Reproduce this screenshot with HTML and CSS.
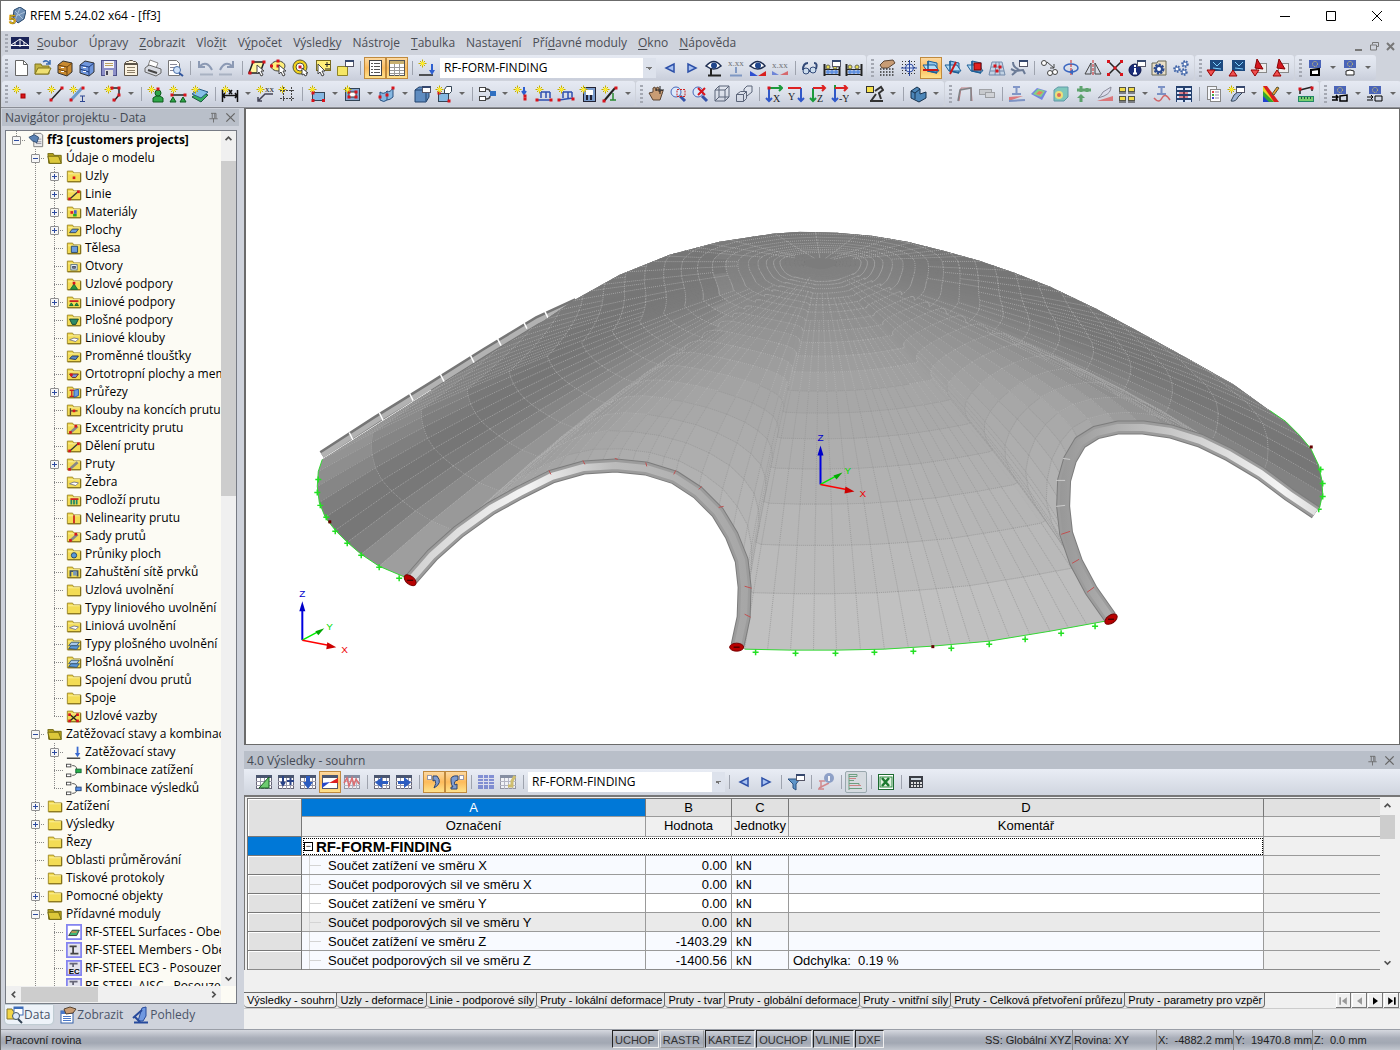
FILE: index.html
```html
<!doctype html>
<html lang="cs">
<head>
<meta charset="utf-8">
<title>RFEM 5.24.02 x64 - [ff3]</title>
<link rel="stylesheet" href="styles.css">
</head>
<body>
<header class="titlebar">
	<span class="logo" data-icon="logo"></span>
	<h1>RFEM 5.24.02 x64 - [ff3]</h1>
	<div class="winbtns">
		<button type="button" aria-label="Minimalizovat"><svg width="12" height="12"><path d="M1 6.500h10" stroke="#000"/></svg></button>
		<button type="button" aria-label="Maximalizovat"><svg width="12" height="12"><path d="M1.500 1.500h9v9h-9z" stroke="#000" fill="none"/></svg></button>
		<button type="button" aria-label="Zavřít"><svg width="12" height="12"><path d="M1 1l10 10M11 1L1 11" stroke="#000"/></svg></button>
	</div>
</header>
<nav class="menubar">
	<span class="grip"></span>
	<span class="bridge" data-icon="bridge"></span>
	<a href="#"><u>S</u>oubor</a>
	<a href="#">Úpr<u>a</u>vy</a>
	<a href="#"><u>Z</u>obrazit</a>
	<a href="#">Vlož<u>i</u>t</a>
	<a href="#">V<u>ý</u>počet</a>
	<a href="#">Výsled<u>k</u>y</a>
	<a href="#">Nástro<u>j</u>e</a>
	<a href="#"><u>T</u>abulka</a>
	<a href="#">Nasta<u>v</u>ení</a>
	<a href="#">Pří<u>d</u>avné moduly</a>
	<a href="#"><u>O</u>kno</a>
	<a href="#"><u>N</u>ápověda</a>
	<div class="docbtns">
		<button type="button" aria-label="Minimalizovat dokument"><svg width="9" height="9"><path d="M1 8h7" stroke="#777" stroke-width="2"/></svg></button>
		<button type="button" aria-label="Obnovit dokument"><svg width="9" height="9"><path d="M2.500 2.500v-2h6v4h-2M.5 3h6v5h-6z" stroke="#777" fill="none"/></svg></button>
		<button type="button" aria-label="Zavřít dokument"><svg width="9" height="9"><path d="M1 1l7 7M8 1L1 8" stroke="#777" stroke-width="2"/></svg></button>
	</div>
</nav>
<div class="toolrow">
	<div class="bar"><span class="grip"></span>
		<span class="set" data-set="new open cabinet cabinetBlue save clip print preview | undo redo | selPara selEllipse selRing selNote noteWin | *list *table | load"></span>
		<select class="combo case" aria-label="Zatěžovací stav"><option>RF-FORM-FINDING</option></select>
		<span class="set" data-set="left right eyeSup xDown eyeDiag xDiag | glasses fenceWin fence"></span>
	</div>
	<div class="bar"><span class="grip"></span><span class="set" data-set="handGrid gridSnap *planeXY planeYZ planeXZ meshGrid wrench | moveCopy rotate mirror scaleX info gearBox gears"></span></div>
	<div class="bar"><span class="grip"></span><span class="set" data-set="blueDown blueUp redDown redUp"></span></div>
	<div class="bar"><span class="grip"></span><span class="set" data-set="euA v euB v"></span></div>
</div>
<div class="toolrow second">
	<div class="bar"><span class="grip"></span><span class="set" data-set="node v line lineI v poly v | support lineSupport solidSupport | dim v dimXX frame | surf v opening v wavy v box boxes v | combo v loadNode loadLine loadLine2 loadSurf loadFree v"></span></div>
	<div class="bar"><span class="grip"></span><span class="set" data-set="hand zoomWin zoomX cube cubes | axX axY axZ axNY v robot v | solid v"></span></div>
	<div class="bar"><span class="grip"></span><span class="set" data-set="frameD tank | beamI contour cubeC arrows paint boxes4 v beamWave tableBlue | report brush v colors v measure"></span></div>
	<div class="bar"><span class="grip"></span><span class="set" data-set="euC v euD v"></span></div>
</div>
<main class="work">
	<aside class="navigator">
		<div class="caption"><h2>Navigátor projektu - Data</h2>
			<button type="button" aria-label="Připnout navigátor" data-icon="pin"></button>
			<button type="button" aria-label="Zavřít navigátor" data-icon="close"></button>
		</div>
		<div class="treebox">
			<ul class="tree" id="tree"></ul>
			<div class="vscroll"><span data-icon="up"></span><i class="thumb"></i><span data-icon="down"></span></div>
			<div class="hscroll"><span data-icon="lt"></span><i class="thumb"></i><span data-icon="gt"></span></div>
		</div>
		<div class="navtabs">
			<button type="button" class="on"><span data-icon="tabData"></span>Data</button>
			<button type="button"><span data-icon="tabView"></span>Zobrazit</button>
			<button type="button"><span data-icon="tabScope"></span>Pohledy</button>
		</div>
	</aside>
	<div class="right">
		<section class="view">
			<svg id="model" viewBox="246 109 1152 636" preserveAspectRatio="xMidYMid meet" role="img" aria-label="Model ff3">
				<defs>
					<clipPath id="shell"><path id="shellPath"/></clipPath>
					<linearGradient id="hl1" gradientUnits="userSpaceOnUse" x1="405" y1="0" x2="750" y2="0">
						<stop offset="0" stop-color="#d0d0d0"/><stop offset=".35" stop-color="#f4f4f4"/><stop offset=".6" stop-color="#bcbcbc"/><stop offset="1" stop-color="#a6a6a6"/>
					</linearGradient>
					<linearGradient id="hl2" gradientUnits="userSpaceOnUse" x1="1060" y1="0" x2="1320" y2="0">
						<stop offset="0" stop-color="#989898"/><stop offset=".3" stop-color="#bababa"/><stop offset=".85" stop-color="#f4f4f4"/><stop offset="1" stop-color="#ddd"/>
					</linearGradient>
				</defs>
				<g id="pipe" fill="none"></g>
				<g id="mesh" clip-path="url(#shell)"></g>
				<g id="edges" fill="none"></g>
				<g id="tubes" fill="none"></g>
				<g id="axes"></g>
			</svg>
		</section>
		<section class="results">
			<div class="caption"><h2>4.0 Výsledky - souhrn</h2>
				<button type="button" aria-label="Připnout tabulku" data-icon="pin"></button>
				<button type="button" aria-label="Zavřít tabulku" data-icon="close"></button>
			</div>
			<div class="restools">
				<span class="set" data-set="tEdit tInsert tDown *tColor tWave | tLeft tRight | *jumpA *jumpB | tBlue tPick |"></span>
				<select class="combo rescase" aria-label="Výsledky pro"><option>RF-FORM-FINDING</option></select>
				<span class="set" data-set="| left right | filter | infoBeam | +bars | excel | calc"></span>
			</div>
			<div class="grid">
				<table>
					<colgroup><col class="c0"><col class="ca"><col class="cb"><col class="cc"><col class="cd"><col></colgroup>
					<thead>
						<tr class="letters"><th rowspan="2"></th><th class="sel">A</th><th>B</th><th>C</th><th>D</th><th class="none"></th></tr>
						<tr class="names"><th class="field">Označení</th><th>Hodnota</th><th>Jednotky</th><th>Komentář</th><th></th></tr>
					</thead>
					<tbody>
						<tr class="group"><th class="sel"></th><td colspan="4"><button type="button" aria-label="Sbalit">−</button>RF-FORM-FINDING</td><td class="rest"></td></tr>
						<tr><th></th><td class="name">Součet zatížení ve směru X</td><td class="num">0.00</td><td>kN</td><td></td><td class="rest"></td></tr>
						<tr><th></th><td class="name">Součet podporových sil ve směru X</td><td class="num">0.00</td><td>kN</td><td></td><td class="rest"></td></tr>
						<tr class="white"><th></th><td class="name">Součet zatížení ve směru Y</td><td class="num">0.00</td><td>kN</td><td></td><td class="rest"></td></tr>
						<tr class="grey"><th></th><td class="name">Součet podporových sil ve směru Y</td><td class="num">0.00</td><td>kN</td><td></td><td class="rest"></td></tr>
						<tr><th></th><td class="name">Součet zatížení ve směru Z</td><td class="num">-1403.29</td><td>kN</td><td></td><td class="rest"></td></tr>
						<tr><th></th><td class="name">Součet podporových sil ve směru Z</td><td class="num">-1400.56</td><td>kN</td><td>Odchylka:&nbsp; 0.19 %</td><td class="rest"></td></tr>
					</tbody>
				</table>
				<div class="vscroll"><span data-icon="up"></span><i class="thumb"></i><span data-icon="down"></span></div>
			</div>
			<div class="sheets">
				<button type="button" class="on">Výsledky - souhrn</button>
				<button type="button">Uzly - deformace</button>
				<button type="button">Linie - podporové síly</button>
				<button type="button">Pruty - lokální deformace</button>
				<button type="button">Pruty - tvar</button>
				<button type="button">Pruty - globální deformace</button>
				<button type="button">Pruty - vnitřní síly</button>
				<button type="button">Pruty - Celková přetvoření průřezu</button>
				<button type="button">Pruty - parametry pro vzpěr</button>
				<div class="steps">
					<button type="button" aria-label="První" data-icon="first" disabled></button>
					<button type="button" aria-label="Předchozí" data-icon="prev" disabled></button>
					<button type="button" aria-label="Další" data-icon="next"></button>
					<button type="button" aria-label="Poslední" data-icon="last"></button>
				</div>
			</div>
		</section>
	</div>
</main>
<footer class="status">
	<span class="hint">Pracovní rovina</span>
	<div class="modes">
		<button type="button" aria-pressed="true">UCHOP</button>
		<button type="button" aria-pressed="false">RASTR</button>
		<button type="button" aria-pressed="true">KARTEZ</button>
		<button type="button" aria-pressed="true">OUCHOP</button>
		<button type="button" aria-pressed="true">VLINIE</button>
		<button type="button" aria-pressed="true">DXF</button>
	</div>
	<div class="coords">
		<span class="ss">SS: Globální XYZ</span>
		<span class="rov">Rovina: XY</span>
		<span class="cx">X:&nbsp; -4882.2 mm</span>
		<span class="cy">Y:&nbsp; 19470.8 mm</span>
		<span class="cz">Z:&nbsp; 0.0 mm</span>
	</div>
</footer>
<script src="app.js"></script>
</body>
</html>
```
FILE: styles.css
```css
*{box-sizing:border-box;}
html,body{height:100%;}
body{margin:0; display:flex; flex-direction:column; overflow:hidden; background:#cfd3dc; border-top:1px solid #6b6b6b; border-left:1px solid #6b6b6b; font:12px/16px "Open Sans","Noto Sans",sans-serif; color:#000;}
button,select{font:inherit; color:inherit; padding:0; margin:0; border:0; background:none;}
h1,h2{margin:0; font-size:12px; font-weight:normal;}
ul{margin:0; padding:0; list-style:none;}
svg{display:block;}

.titlebar{display:flex; align-items:center; height:30px; flex:none; padding-left:7px; background:#fff;}
.titlebar h1{padding-left:4px; font-size:12px;}
.winbtns{margin-left:auto; display:flex;}
.winbtns button{width:46px; height:30px; display:flex; align-items:center; justify-content:center;}

.menubar{display:flex; align-items:center; height:24px; flex:none; gap:11px; color:#4a4d55;}
.menubar a{color:inherit; text-decoration:none;}
.menubar u{text-underline-offset:2px;}
.menubar .grip{margin:0 -8px 0 4px;}
.bridge{margin-right:-3px;}
.docbtns{margin:6px 5px 0 auto; display:flex; gap:7px;}

.grip{width:3px; height:18px; flex:none; background:repeating-linear-gradient(#a4a8b2 0 2px,transparent 2px 4px);}
.toolrow{display:flex; height:26px; flex:none; overflow:hidden; padding-left:1px;}
.second{border-bottom:1px solid #8a8d96; height:27px;}
.bar{display:flex; align-items:center; flex:none; height:25px; margin-right:1px; padding:0 2px 0 4px; border-radius:3px; background:linear-gradient(#e6eaf3,#dbe0ea 50%,#c9cedb);}
.bar .grip{margin-right:2px;}
.bar:first-child{padding:0 1px 0 3px;}
.set{display:flex; align-items:center; flex:none;}
.tool{width:22px; height:22px; display:flex; align-items:center; justify-content:center;}
.tool.active{border:1px solid #c08a3e; background:linear-gradient(#fdd9a0,#fdbb5c 50%,#fee28b);}
.tool.pressed{border:1px solid #9aa8ae; border-radius:2px; background:#d6dbe0;}
.sep{width:1px; height:14px; margin:0 3px 0 4px; background:#9ea3ae;}
.drop{width:13px; height:22px; display:flex; align-items:center; justify-content:center;}
.drop::before{content:""; border:3px solid transparent; border-top-color:#666; border-bottom:0;}
.combo{height:20px; padding:0 16px 0 4px; appearance:none; border-radius:0; background-color:#fff; background-repeat:no-repeat;
	background-image:linear-gradient(45deg,transparent 50%,#777 50%),linear-gradient(-45deg,transparent 50%,#777 50%),linear-gradient(#dde2ec,#dde2ec);
	background-position:right 7px top 9px,right 4px top 9px,right; background-size:3px 3px,3px 3px,13px 100%;}
.case{width:216px; margin:0 3px 0 2px;}
.rescase{width:197px; margin:0 0 0 1px;}

.work{flex:1; display:flex; min-height:0;}
.caption{display:flex; align-items:center; flex:none; height:17px; padding:0 4px 0 3px; gap:2px; background:#b9bfc9; color:#444a54;}
.caption h2{flex:1; line-height:17px;}
.navigator{width:239px; flex:none; display:flex; flex-direction:column; padding:1px 1px 0 1px;}
.navigator .caption{padding-right:1px;}
.treebox{flex:1; min-height:0; margin:4px 2px 0 3px; border:1px solid #777b84; display:grid; grid-template:minmax(0,1fr) 17px/minmax(0,1fr) 15px; background:#fcfbf4;}
.tree{overflow:hidden;}
.tree li{display:flex; height:18px; white-space:nowrap; line-height:17px; padding-left:1px;}
.tree li:first-child{font-weight:bold; line-height:17px;}
.tree i{width:19px; height:18px; flex:none; display:flex; align-items:center; justify-content:center;}
.tree .v,.tree .t,.tree .e{background:repeating-linear-gradient(#888 0 1px,transparent 1px 2px) 9px 0/1px 18px no-repeat;}
.tree .t{background:repeating-linear-gradient(#888 0 1px,transparent 1px 2px) 9px 0/1px 18px no-repeat,repeating-linear-gradient(90deg,#888 0 1px,transparent 1px 2px) 9px 9px/10px 1px no-repeat;}
.tree .e{background:repeating-linear-gradient(#888 0 1px,transparent 1px 2px) 9px 0/1px 9px no-repeat,repeating-linear-gradient(90deg,#888 0 1px,transparent 1px 2px) 9px 9px/10px 1px no-repeat;}
.tree li button{width:9px; height:9px; border:1px solid #8f8f8f; border-radius:1px; background:linear-gradient(#2d4ba0,#2d4ba0) center/5px 1px no-repeat #f6f6f6;}
.tree li button.plus{background:linear-gradient(#2d4ba0,#2d4ba0) center/5px 1px no-repeat,linear-gradient(#2d4ba0,#2d4ba0) center/1px 5px no-repeat #f6f6f6;}
.tree li span{width:16px; height:16px; flex:none; margin:1px 3px 0 2px;}
.vscroll{display:flex; flex-direction:column; align-items:center; background:#f0f0f0;}
.vscroll span:last-child{margin-top:auto;}
.vscroll .thumb{width:100%; height:335px; margin-top:15px; background:#cdcdcd;}
.hscroll{display:flex; align-items:center; background:#f0f0f0;}
.hscroll .thumb{width:77px; height:15px; background:#cdcdcd;}
.hscroll span:last-child{margin-left:auto;}
.navtabs{display:flex; height:25px; flex:none; gap:5px; padding:1px 3px 5px; color:#4a5468;}
.navtabs button{display:flex; align-items:center; padding:0 3px 0 1px;}
.navtabs .on{background:#eef3f9; border-radius:0 0 4px 4px; box-shadow:0 0 2px #9bb;}

.right{flex:1; min-width:0; display:flex; flex-direction:column; padding-left:4px;}
.view{flex:1; min-height:0; background:#fff; border:1px solid #6b6b6b; border-width:1px 1px 1px 2px; margin-bottom:6px;}
#model{width:100%; height:100%;}
.results{flex:none; background:#f0f0f0;}
.results .caption{height:18px; padding-right:3px;}
.restools{display:flex; align-items:center; height:26px; padding-left:9px; background:linear-gradient(#e9edf5,#d0d5df);}
.grid{display:flex; border-top:2px solid #777; border-left:1px solid #777; padding:1px 5px 0 2px; font:13px/17px "Liberation Sans",Arial,sans-serif;}
.grid table{flex:1; min-width:0; border-collapse:collapse; table-layout:fixed; border-top:1px solid #8b8b8b; border-bottom:1px solid #8b8b8b;}
.c0{width:54px;} .ca{width:344px;} .cb{width:86px;} .cc{width:57px;} .cd{width:475px;}
.grid td,.grid th{height:19px; padding:0 4px; border:1px solid #9a9a9a; border-width:1px 1px 0 1px; font-weight:normal; white-space:nowrap; overflow:hidden;}
.grid th:first-child{background:#e1e1e1; border-color:#777; box-shadow:inset 1px 1px #fff;}
.grid .letters th{height:18px; background:#e1e1e1; border-color:#777;}
.grid .names th{height:19px; padding:0 0 2px; background:#f0f0f0; box-shadow:none; border-color:#9a9a9a;}
.grid .letters th.sel,.grid th.sel:first-child{background:#0078d7; color:#fff; box-shadow:none;}
.grid td{background:#f8faff;}
.grid .num{text-align:right;}
.grid .white td{background-color:#fff;}
.grid .grey td{background-color:#eaeaea;}
.grid tr td.rest{background:#f0f0f0; border-right:0;}
.grid th:last-child{border-right:0;}
.grid td.name{padding-left:26px; background-image:linear-gradient(#d4d4d4,#d4d4d4),linear-gradient(#d4d4d4,#d4d4d4); background-size:1px 100%,12px 1px; background-position:7px 0,7px 9px; background-repeat:no-repeat;}
.grid .group td{background:#fff; font-size:15px; font-weight:bold; padding-left:2px; outline:1px dotted #000; outline-offset:-2px;}
.grid .group td.rest{outline:0;}
.group button{width:9px; height:9px; margin-right:3px; border:1px solid #000; font:9px/7px "Liberation Sans",Arial,sans-serif; vertical-align:3px; background:#fff;}
.grid .vscroll{width:15px;}
.grid .vscroll .thumb{height:24px; margin-top:2px;}
.sheets{display:flex; margin-top:22px; height:17px; border-top:1px solid #6b6b6b; border-bottom:1px solid #ccc; font:11px/15px "Liberation Sans",Arial,sans-serif;}
.sheets>button{height:15px; padding:0 2px 0 3px; background:#e6e6e6; border:1px solid #6b6b6b; border-width:0 1px 1px 0; border-radius:0 0 4px 4px; white-space:nowrap;}
.sheets .on{background:#f0f0f0;}
.steps{margin-left:auto; display:flex;}
.steps button{width:15px; height:15px; margin-right:1px; background:#f0f0f0; box-shadow:inset -1px -1px #777,inset 1px 1px #fff; display:flex; align-items:center; justify-content:center;}
.results::after{content:""; display:block; height:20px;}

.status{flex:none; display:grid; grid-template-columns:611px auto 1fr; height:21px; border-top:1px solid #9a9ea7; font:11px/18px "Liberation Sans",Arial,sans-serif; color:#222; background:linear-gradient(#d5d8df,#a9aeb9 40%,#a2a8b3 65%,#c3c7cf);}
.hint{padding-left:4px; line-height:20px;}
.modes{display:flex; gap:1px;}
.modes button{height:18px; padding:0 3px 0 2px; color:#333; border:1px solid #000; border-color:#222 #eee #eee #222;}
.modes button[aria-pressed=false]{border-color:#ddd #999 #999 #ddd; padding-bottom:2px;}
.coords{display:flex; justify-content:flex-end; padding-right:24px; line-height:20px;}
.coords span{border-left:1px solid #888; padding-left:1px; white-space:nowrap;}
.coords .ss{border:0;}
.ss{width:88px;} .rov{width:84px;} .cx{width:77px;} .cy{width:79px;} .cz{width:64px;}
```
FILE: app.js
```js
// small drawing helpers, every icon lives on an 18x18 grid
function p(d, s, w, f) { return '<path d="' + d + '" stroke="' + (s || 'none') + '" stroke-width="' + (w || 1) + '" fill="' + (f || 'none') + '"/>'; }
function r(x, y, w, h, f, s) { return '<rect x="' + x + '" y="' + y + '" width="' + w + '" height="' + h + '" fill="' + f + '"' + (s ? ' stroke="' + s + '"' : '') + '/>'; }
function c(x, y, q, f, s) { return '<circle cx="' + x + '" cy="' + y + '" r="' + q + '" fill="' + f + '"' + (s ? ' stroke="' + s + '"' : '') + '/>'; }
function dot(x, y) { return r(x - 1.5, y - 1.5, 3, 3, '#d8141c'); }
function t(s, x, y, z, f) { return '<text x="' + x + '" y="' + y + '" font-size="' + z + '" fill="' + (f || '#222') + '" font-family="Liberation Serif">' + s + '</text>'; }
function op(o, s) { return '<g opacity="' + o + '">' + s + '</g>'; }

var star = p('M4.500 .5v8M.5 4.500h8M2 2l5 5M7 2l-5 5', '#c2ac00') + p('M4.500 2.500v4M2.500 4.500h4', '#ffee2e', 2);
var win = r(9.5, 1.5, 8, 6, '#fff', '#556') + r(9, 1, 9, 2, '#36486e');
var cursor = p('M9 6v9l2-2 2 4 2-1-2-4h3z', '#444', 1, '#fff');
var gridBg = r(1.5, 2.5, 15, 13, '#fff', '#667') + r(1, 2, 16, 3, '#4a5670') + p('M1 8.500h16M1 12.500h16M5.500 5v11M9.500 5v11M13.500 5v11', '#99a');
function cab(a, b) { return p('M2 6l5-4 9 2v9l-5 4-9-3z', '#333', 1, a) + p('M2 6l9 2v9M2 10l9 3M11 8l5-4', b) + r(5, 8, 3, 1, '#fff') + r(5, 12, 3, 1, '#fff'); }
function eu(x) { return r(3, 1, 12, 8, '#4a64b8') + '<circle cx="9" cy="5" r="2.500" fill="none" stroke="#e0d060" stroke-dasharray="1 1"/>' + x; }
function plane(x) { return p('M6 2l9 2v10l-9-2z', '#1d5f96', 1, '#8fc4ea') + p('M1 6h12l4 6H5z', '#1d5f96', 1, '#b4dcf6') + p('M6 2v10l9 2', '#1d5f96', 1.5) + x; }
function ax(a, b, l, g) { return p(a, '#1c9a3c', 2) + p(b, '#3058c8', 2) + t(l, 8, 17, 10) + (g || ''); }
var ibeam = p('M5 2h7M8.500 2v7M4 9h9', '#5b77b8', 2);
var eye = p('M1 7q8-9 15 0-7 6-15 0z', '#1c2c50', 1.5, '#fff') + c(9, 6.5, 3, '#20468c');
var picket = p('M1.500 5v12M16.500 5v12', '#222', 2) + p('M1 10.500h16M1 15.500h16', '#222') + c(5, 8, 2, '#e8dc50', '#665') + c(9, 13, 2, '#5f8fe0') + c(12, 8, 2, '#e8dc50', '#665') + c(5, 13, 2, '#5f8fe0') + c(13, 13, 2, '#5f8fe0');
var loupe = c(7, 7, 5, '#dceafc', '#4a68b8') + p('M11 11l5 5', '#3552a8', 3);
var cubeW = p('M2 5h10v11H2zM6 1h10v11l-4 4M2 5l4-4M12 5l4-4M6 1v11h10M6 12l-4 4', '#5b6478');
var handShape = p('M2 8l4-1V3l2-1 1 4 1-4 2 1v4l3-2 1 1-3 9H6z', '#5c4634', 1, '#c89c74');

var icons = {
	logo: p('M6 3l6-3 6 4-2 8-6 4-5-5z', '#26476c', 1, '#6e8fb5') + p('M7 4l8 8M12 1l-5 12M17 5L8 9', '#a9c0d8') + '<text x="1" y="17" font-size="13" font-weight="bold" fill="#f1c21b" stroke="#6b5200" stroke-width=".5" font-family="Liberation Sans">5</text>',
	bridge: r(0, 3, 18, 12, '#1b2458') + p('M0 11.500h18M0 11l9-6v8M9 5l8 6M4 11V8M13 11V8', '#fff'),
	new: p('M3.500 1.500h8l4 4v11h-12z', '#666', 1, '#fff') + p('M11.500 1.500v4h4', '#666'),
	open: p('M1 15V5h6l1 2h7v8z', '#80751c', 1, '#c2b442') + p('M1 15l3-6h13l-3 6z', '#80751c', 1, '#efe072') + p('M9 3q4-3 7 2M16 1v4h-4', '#3b6cb0', 1.5),
	cabinet: cab('#c98a30', '#6f4510'), cabinetBlue: cab('#6f96dc', '#203f80'),
	save: r(1.5, 1.5, 15, 15, '#8c8fc8', '#4c5088') + r(4, 2, 10, 7, '#f4f4f8') + r(5, 11, 8, 6, '#ddd') + r(6, 12, 2, 4, '#445') + p('M5 4.500h8M5 6.500h8', '#b9a060'),
	clip: p('M2.500 4.500l2-2h2l1-1h3l1 1h2l2 2v12h-13z', '#5b5347', 1, '#fbf2df') + p('M3 5h12', '#5b5347', 2) + p('M5 8.500h8M5 11.500h8M5 13.500h8', '#8c7f6a'),
	print: p('M4 7l2-6 8 3-2 5z', '#888', 1, '#fff') + p('M1 9l4-3 12 4v4l-5 3-11-4z', '#666', 1, '#d8dbe2') + p('M4 11l9 3', '#444', 2),
	preview: p('M2.500 1.500h8l3 3v12h-11z', '#777', 1, '#fff') + p('M4 5.500h7M4 8.500h5M4 11.500h4', '#889') + c(11, 11, 3.5, '#cfe2fa', '#4a6fa8') + p('M13 14l4 3', '#2f549c', 2),
	undo: p('M3 2v6h6M4 7q7-6 12 4', '#8c9ab4', 2) + p('M4 15.500h13', '#a9b2c2', 2),
	redo: p('M15 2v6H9M14 7Q7 1 2 11', '#8c9ab4', 2) + p('M1 15.500h13', '#a9b2c2', 2),
	selPara: p('M5 3h11l-4 11H1z', '#222', 1.5, '#fff8a0') + dot(5, 3) + dot(16, 3) + dot(2, 14) + cursor,
	selEllipse: '<ellipse cx="8" cy="7" rx="7" ry="5" fill="#ffef7a" stroke="#444"/>' + dot(8, 2) + dot(1.5, 7) + dot(8, 7) + cursor,
	selRing: '<circle cx="8" cy="8" r="5.500" fill="none" stroke="#f2d21a" stroke-width="3"/>' + c(8, 8, 7, 'none', '#553') + c(8, 8, 4, '#fff', '#553') + dot(8, 8) + p('M10 9v7l2-1 1 2 2-1-1-2h2z', '#444', 1, '#fff'),
	selNote: r(2.5, 1.5, 14, 10, '#ffef7a', '#776a20') + p('M4 5v10l2-2 2 4 2-1-2-4h3z', '#444', 1, '#fff') + p('M13 3v5M11 5.500h5M11 10h5', '#222'),
	noteWin: p('M1.500 7.500h10v9h-10z', '#8f8425', 1, '#f6e765') + win,
	list: r(3.5, 1.5, 12, 15, '#fff', '#444') + p('M5 4.500h2M8 4.500h6M5 7.500h2M8 7.500h6M5 10.500h2M8 10.500h6M5 13.500h2M8 13.500h6', '#555'),
	table: r(1.5, 1.5, 15, 15, '#fff', '#555') + r(2, 2, 14, 3, '#c8b070') + p('M2 8.500h14M2 11.500h14M2 14.500h14M6.500 5v12M11.500 5v12', '#999'),
	load: star + p('M1 16h14', '#222', 1.5) + p('M14 5v8', '#2e5fd0', 2) + p('M11 11h6l-3 5z', 'none', 1, '#2e5fd0'),
	left: p('M13 5v8L5 9z', '#2d50a8', 1.5, '#a8c2f2'), right: p('M5 5v8l8-4z', '#2d50a8', 1.5, '#a8c2f2'),
	eyeSup: eye + p('M6 10v6M3 16.500h13', '#222', 2), eyeDiag: eye + p('M1 17V12l8 5z', 'none', 1, '#2e4fd0') + p('M17 12v5H9z', 'none', 1, '#d82020'),
	xDown: op(.6, t('x.xx', 1, 7, 9) + p('M9 8v6M3 16.500h12', '#4a70b0', 2)), xDiag: op(.6, t('x.xx', 1, 9, 9) + p('M1 16v-4l7 4z', 'none', 1, '#2e4fd0') + p('M17 12v4H9z', 'none', 1, '#d82020')),
	glasses: c(5, 12, 3, '#cde', '#334a78') + c(12, 11, 3, '#cde', '#334a78') + p('M2 11q0-7 5-7M15 10q2-6-2-6M8 12h1', '#334a78', 2),
	fence: picket, fenceWin: picket + win,
	handGrid: p('M2 6l4-4 9-1 2 3-7 5H4z', '#5c4634', 1, '#c89c74') + '<path d="M2 10h15M2 13h15M2 16h15" stroke="#333" stroke-width="1.500" stroke-dasharray="1.500 1.500"/>',
	gridSnap: '<path d="M2 2.500h15M2 5.500h15M2 8.500h15M2 11.500h15M2 14.500h15" stroke="#333" stroke-dasharray="1 2"/>' + c(9.5, 9, 4, '#dfe7f8', '#2b49a0') + p('M9.500 1v16M1 9h16', '#2b49a0'),
	planeXY: plane(p('M1 11h15', '#c81818', 2)), planeYZ: plane(p('M6 15L12 3', '#c81818', 2)), planeXZ: plane(r(8, 4, 7, 7, '#e02020', '#700')),
	meshGrid: op(.7, p('M4 3l10 0 3 13H1zM3 8h12M2 12h14M8 3l-1 13M11 3l1 13', '#4a6b94', 1, '#bcd0e4')) + dot(7, 7) + dot(12, 8) + dot(9, 12),
	wrench: p('M2 16l7-6M1 10l4 2 8-1 2 4', '#6a7a96', 2) + win + p('M3 3q0 5 5 7', '#6a7a96', 2),
	moveCopy: c(4, 4, 2.5, '#fff', '#444') + c(10, 14, 2.5, '#fff', '#444') + c(15, 13, 2.5, '#fff', '#444') + p('M7 3l7 6M14 5v4h-4', '#444'),
	rotate: '<ellipse cx="9" cy="9" rx="7" ry="4" fill="none" stroke="#3a66c0" stroke-width="1.500"/>' + '<path d="M9 1v16" stroke="#c22" stroke-dasharray="3 1"/>' + p('M11 10v6l-4-3z', 'none', 1, '#3a66c0'),
	mirror: p('M7 4v11H1zM11 4v11h6z', '#444') + '<path d="M9 1v16" stroke="#c22" stroke-dasharray="3 1"/>',
	scaleX: p('M2 2l14 14M16 2L2 16', '#222', 1.5) + dot(2.5, 2.5) + dot(15.5, 2.5) + dot(2.5, 15.5) + dot(15.5, 15.5) + dot(9, 9),
	info: c(7, 11, 6, '#1a2c78', '#0b154a') + p('M7 9v6M5 14.500h4', '#fff', 2) + r(6, 6, 2, 2, '#fff') + win,
	gearBox: p('M2 4h5l1-2h8v14H2z', '#665', 1, '#e9dfc8') + '<circle cx="9" cy="10" r="4" fill="#fff" stroke="#2b4a90" stroke-width="3" stroke-dasharray="2 1"/>' + '<circle cx="9" cy="10" r="3" fill="none" stroke="#2b4a90" stroke-width="2"/>',
	gears: '<g fill="#dbe7fa" stroke="#3f64a8" stroke-width="2.500" stroke-dasharray="1.500 1"><circle cx="5" cy="10" r="2.500"/><circle cx="13" cy="5" r="2.500"/><circle cx="12" cy="13" r="2.500"/></g>' + c(5, 10, 2, '#fff', '#3f64a8') + c(13, 5, 2, '#fff', '#3f64a8') + c(12, 13, 2, '#fff', '#3f64a8'),
	blueDown: r(4, 1, 13, 11, '#1d4a80') + p('M7 3l4 4 4-4M7 9l8 1', '#7fd0ff') + p('M1 11h8l-4 6z', '#900', 1, '#f05050'),
	blueUp: r(4, 1, 13, 11, '#1d4a80') + p('M7 3l4 4 4-4M7 9l8 1', '#7fd0ff') + p('M1 17h8l-4-6z', '#900', 1, '#f05050'),
	redDown: r(6.5, 4.5, 10, 9, '#eee', '#888') + p('M7 0l6 10-8-1z', '#800', 1, '#d41820') + p('M1 11h8l-4 6z', '#900', 1, '#f05050'),
	redUp: r(6.5, 4.5, 10, 9, '#eee', '#888') + p('M7 0l6 10-8-1z', '#800', 1, '#d41820') + p('M1 17h8l-4-6z', '#900', 1, '#f05050'),
	euA: eu(p('M5 11l8-1v6H5z', '#000', 2, '#fff')), euB: eu(p('M5 16v-4q4-2 8 0v4z', '#222', 1, '#fff')),
	euC: eu(p('M1 12h6M1 15h6M5 10l2 2-2 2M9 11l7-1v6H9z', '#000', 1.5)), euD: eu(p('M1 12h6M1 15h6M5 10l2 2-2 2M9 11h7v5H9z', '#000')),
	node: star + r(9, 9, 4, 4, '#d8141c', '#a00'), line: star + p('M4 15L15 3', '#222', 1.5) + dot(4, 15) + dot(15, 3),
	lineI: star + p('M2 15L13 3', '#6c9ccc', 3) + dot(2, 15) + dot(14, 3) + p('M11 11h5M13.500 11v5M11 16.500h5', '#2c4690'),
	poly: star + p('M8 3h7v7l-5 6', '#222', 1.5) + dot(8, 3) + dot(15, 3) + dot(15, 10) + dot(10, 15),
	support: star + p('M6 17v-4l3-2h4l3 2v4z', '#0c5a1c', 1, '#2fa648') + c(11, 8, 3, '#2fa648', '#0c5a1c') + dot(11, 4),
	lineSupport: star + p('M3 10h13', '#222', 1.5) + dot(3, 10) + dot(16, 10) + p('M1 17l3-5 3 5zM11 17l3-5 3 5z', '#0c5a1c', 1, '#2fa648'),
	solidSupport: p('M1 12l7-5 9 3-7 7z', '#1c5a40', 1, '#35b060') + p('M1 9l7-5 9 3-7 6z', '#285f88', 1, '#86c0e8') + star,
	dim: p('M1.500 5v12M16.500 5v12M2 10.500h14M4 8l-2 2.500L4 13M14 8l2 2.500-2 2.500M8 5l3 4M11 5l-3 4', '#111', 1.5) + star, dimXX: star + t('xx', 9, 7, 9) + p('M17 9H9l-7 7M2 12v4h4', '#445', 1.5),
	frame: star + '<path d="M5.500 2v14M13.500 2v14M2 5.500h14M2 13.500h14" stroke="#444" stroke-dasharray="2 1"/>',
	surf: star + r(4.5, 7.5, 12, 8, '#86b8e2', '#345') + dot(5, 8) + dot(15.5, 15.5) + dot(5, 15.5),
	opening: r(2.5, 3.5, 14, 12, '#86a8d2', '#345') + r(6, 7, 7, 5, '#fff', '#333') + dot(6, 7) + dot(13, 12) + dot(13, 7) + dot(6, 12) + star,
	wavy: p('M2 7q4 3 7-1v9q-3 3-7 0zM9 6q3 2 6-3v9q-3 3-6 3', '#2a5080', 1, '#86b8e2') + dot(2, 12) + dot(15, 3) + dot(9, 10),
	box: p('M2 5l4-3h10v10l-3 5H2z', '#23436c', 1, '#5f8cc0') + p('M2 5h11v11', '#23436c') + win,
	boxes: r(3.5, 8.5, 10, 8, '#86b8e2', '#345') + p('M9.500 4.500l2-3h5v5l-2 2h-5z', '#345', 1, '#fff') + dot(4, 8) + dot(14, 16) + star,
	combo: r(1.5, 2.5, 6, 4, '#fff', '#444') + r(1.5, 11.5, 6, 4, '#fff', '#444') + p('M8 4q4 0 4 3M8 14q4 0 4-3', '#444', 1.5) + r(12, 6, 6, 5, '#2f6fc0'),
	loadNode: star + p('M11 2v6M9 6l2 3 2-3', '#2e5fd0', 2) + dot(12, 14) + dot(12, 11),
	loadLine: star + p('M2 15h14M6 7v6M11 7v6M15 7v6M6 7h9', '#2e4fb0', 1.5) + dot(2, 15) + dot(16, 15), loadLine2: star + p('M2 15l14-2M6 7v6M11 7v6M15 7v5M6 7h9', '#2e4fb0', 1.5) + dot(2, 15) + dot(16, 14),
	loadSurf: r(4.5, 2.5, 12, 14, '#7a9ccc', '#223') + r(7, 5, 7, 5, '#fff') + p('M8 10v5M12 10v5', '#223', 2) + star, loadFree: star + p('M3 16L14 3', '#222', 2) + dot(3, 16) + dot(15, 3) + p('M12 8v7M9 15h6', '#2a8a30', 1.5),
	hand: handShape + p('M13 1v8M9 5h8', '#222'), zoomWin: loupe + '<path d="M8 4.500h8v7H8z" fill="none" stroke="#c22" stroke-dasharray="2 1"/>', zoomX: loupe + p('M7 3l7 7M14 3L7 10', '#d8141c', 2),
	cube: cubeW, cubes: p('M1.500 9.500h7v7h-7zM5.500 6.500l-4 3M8.500 9.500l3-3h-6M11.500 6.500v7l-3 3M9 6V4l3-3h5v6l-5 4', '#5b6478'),
	axX: ax('M4 3h13M14 0l3 3-3 3', 'M4 3v13M1 13l3 3 3-3', 'X', dot(4, 3)), axY: ax('M14 3v0', 'M14 3v13M11 13l3 3 3-3', '', p('M1 3h13', '#d22', 2) + t('Y', 1, 15, 10)),
	axZ: ax('M4 3v13M1 13l3 3 3-3', 'M4 3v1', 'Z', p('M4 3h12M13 0l3 3-3 3', '#d22', 2)), axNY: ax('M4 0v6', 'M4 4v12M1 13l3 3 3-3', '-Y', p('M4 3h12M13 0l3 3-3 3', '#d22', 2)),
	robot: r(.5, 1.5, 7, 6, '#f6e24c', '#333') + p('M9 6l6-4 2 3-4 3 2 6M4 16h13M10 9l-5 7', '#333', 2), solid: p('M2 6l6-4 3 2v5l6-2v6l-7 4-8-4z', '#17324e', 1, '#4c86b8') + p('M2 6l4 2v6M6 8l5-4', '#17324e'),
	frameD: op(.6, p('M3 16L5 3h10l1 13', '#a33', 1) + p('M2 16L4 5l11-2v13', '#444', 1.5)), tank: op(.6, r(1.5, 4.5, 12, 5, '#bbb', '#777') + r(7.5, 7.5, 9, 5, '#ccc', '#777')),
	beamI: op(.7, ibeam + p('M1 16v-4l14-1z', 'none', 1, '#e05050') + p('M1 16l16-1', '#5b77b8', 2)),
	contour: op(.8, p('M1 9l6-6 10 3-5 9z', 'none', 1, '#5a70e0') + p('M3 9l5-5 7 2-4 6z', 'none', 1, '#6fd06a') + p('M6 9l3-3 4 1-3 3z', 'none', 1, '#f26040')),
	cubeC: op(.8, p('M2 5l4-3h10v10l-4 4H2z', '#489', 1, '#69c2b0') + c(7, 10, 4, '#f2e060') + c(7, 10, 2, '#e05030')),
	arrows: op(.7, p('M7 1v6M3 5h7M13 3v4M10 5h7M7 17v-6', '#2a8a3a', 3) + p('M3 13l4-4 4 4z', 'none', 1, '#2a8a3a')), paint: op(.7, p('M2 13q3-2 5-6l8-5q0 6-7 9z', '#667', 1, '#dde') + p('M1 16l16-5v5z', 'none', 1, '#e05050')),
	boxes4: '<g fill="#f2dc4a" stroke="#554"><rect x="1.500" y="2.500" width="6" height="4"/><rect x="10.500" y="2.500" width="6" height="4"/><rect x="1.500" y="11.500" width="6" height="4"/><rect x="10.500" y="11.500" width="6" height="4"/></g>' + p('M1 8h7M10 8h7M1 17h7M10 17h7', '#222'),
	beamWave: op(.75, ibeam + p('M1 13q5 6 8 0t8 2', '#d04040', 1.5)), tableBlue: r(1, 1, 16, 16, '#24406e') + p('M2 4h6M2 8h6M2 12h6M2 16h6M10 4h6M10 8h6M10 12h6M10 16h6', '#dde8fa', 2) + p('M4 8h9M4 12h9', '#d22'),
	report: r(2.5, 1.5, 9, 13, '#f4f6fa', '#888') + r(5.5, 4.5, 10, 12, '#fff', '#888') + p('M10 7h4M10 10h4M10 13h4', '#98a') + p('M7 7h2', '#d44', 2) + p('M7 10h2', '#4a4', 2) + p('M7 13h2', '#44c', 2), brush: star + p('M4 16q5 1 7-4l4-4-3-2-5 4z', '#345', 1, '#9fb4d8') + win,
	colors: p('M1 1v16h15z', 'none', 1, '#e8d820') + p('M1 6v11h11z', 'none', 1, '#30a830') + p('M1 11v6h6z', 'none', 1, '#2040d0') + p('M1 1h4l12 16h-5z', 'none', 1, '#d82020') + p('M10 9l5-7 2 1-5 7z', '#553', 1, '#f0a030'),
	measure: p('M3 5l12-3M3 5v4M15 2v4', '#222', 1.5) + dot(3, 4) + dot(15, 3) + r(1.5, 11.5, 15, 5, '#78d070', '#286') + p('M4.500 12v2M7.500 12v2M10.500 12v2M13.500 12v2', '#254'),
	tEdit: gridBg + p('M4 15L14 4v11z', '#175c22', 1, '#6dcc70'), tInsert: gridBg + p('M6 3v8M4 9l2 3 2-3M10 8h7M13.500 5v7', '#2a4488', 2), tDown: gridBg + p('M9 3v8', '#2c5cc0', 4) + p('M4 9h10l-5 7z', 'none', 1, '#2c5cc0'),
	tColor: r(1.5, 2.5, 15, 13, '#fff', '#556') + r(1, 2, 16, 3, '#4a5670') + p('M1 15v-5l8-1z', 'none', 1, '#2848c8') + p('M17 5v5H8z', 'none', 1, '#d22'), tWave: op(.6, gridBg + p('M1 10l3-5 2 8 3-8 2 7 2-6 3 5', '#d22', 1.5)),
	tLeft: gridBg + p('M15 9.500H8', '#2c5cc0', 3) + p('M9 4v11L2 9.500z', 'none', 1, '#2c5cc0'), tRight: gridBg + p('M3 9.500h7', '#2c5cc0', 3) + p('M9 4v11l7-5.500z', 'none', 1, '#2c5cc0'),
	jumpA: r(2.5, 2.5, 4, 4, '#fff', '#99a') + p('M8 8V3h4q6 7-3 12 3-5 1-8z', '#2f446c', 1, '#7f9cd0'), jumpB: r(12.5, 2.5, 4, 4, '#fff', '#99a') + p('M11 3Q3 2 4 8q0 4 2 6H4v2h6v-5l-2 1q-2-4 3-5z', '#2f446c', 1, '#7f9cd0'),
	tBlue: op(.7, r(1, 2, 16, 14, '#5a6cc8') + p('M1 5.500h16M1 8.500h16M1 11.500h16M6.500 2v14M11.500 2v14', '#dde')), tPick: op(.6, gridBg + p('M9 13h4V8l3-5', '#c8a820', 3)),
	filter: p('M1 6h12l-4 5v6l-3-2v-4z', '#2a5080', 1, '#5e94c8') + win, infoBeam: op(.55, p('M2 15l10-5M2 8h6M4 8v7M1 16h6', '#c44', 1.5) + c(12, 5, 5, '#4a68a8') + p('M12 3v5', '#fff', 2)),
	bars: op(.75, p('M2 1v16M2 3.500h8v-2H2M2 7.500h5M2 10.500h10v2H2M2 15.500h13', '#4a8a60') + p('M2 5.500h7M2 12.500h12', '#c66')),
	excel: r(1.5, 1.5, 15, 15, '#fff', '#1c6a30') + r(3, 4, 12, 10, '#dff0df', '#2a8a3e') + p('M5 5l7 8M12 5l-7 8', '#1c7a30', 2.5), calc: r(2, 3, 14, 12, '#3a3d44') + r(4, 5, 10, 2, '#cfd8e0') + '<path d="M4 10h11M4 13h11" stroke="#ddd" stroke-width="2" stroke-dasharray="2 1"/>',
	pin: p('M6 4h6v6M7.500 4v6M4 10.500h10M9 10v5M10.500 4v6', '#666'), close: p('M4 4l10 10M14 4l-10 10', '#666', 1.5),
	up: p('M5.500 11L9 7.500l3.500 3.500', '#505050', 2), down: p('M5.500 7.500L9 11l3.500-3.500', '#505050', 2), lt: p('M11 5.500L7.500 9l3.500 3.500', '#505050', 2), gt: p('M7.500 5.500L11 9l-3.500 3.500', '#505050', 2),
	first: p('M5 5v9', '#999', 2) + p('M13 5v9L7 9.500z', 'none', 1, '#999'), prev: p('M12 5v9L6 9.500z', 'none', 1, '#999'), next: p('M6 5v9l6-4.500z', 'none', 1, '#000'), last: p('M5 5v9l6-4.500z', 'none', 1, '#000') + p('M13 5v9', '#000', 2),
	tabData: p('M1 13V3h5l1 2h4v8z', '#86762a', 1, '#f2d648') + r(8, 1, 9, 8, '#fff', '#3c6cb8') + r(8, 1, 9, 2, '#3c6cb8') + c(10, 10, 3.5, '#dceafc', '#456') + p('M12 13l4 4', '#345', 2),
	tabView: r(2, 5, 12, 12, '#fff', '#3560a8') + r(2, 5, 12, 3, '#4b78c8') + p('M4 10.500h8M4 12.500h8M4 14.500h8', '#4b78c8') + p('M5 3l6-2 6 2-3 4-7 1z', '#543', 1, '#c89c74'),
	tabScope: p('M10 2l4-1v9l-3 5H6z', '#274a9c', 1, '#6f98e0') + p('M1 12l9-8M2 16.500h14M3 11l5 5', '#274a9c', 2),
	docRoot: p('M6.500 1.500h8l2 2v13h-10z', '#777', 1, '#eee') + p('M9 8h6M9 11h6M9 13h6', '#889') + p('M1 6l6-3 5 3-2 6-5-2z', '#27466c', 1, '#5a82b4'),
	folderOpen: p('M2 15L1 4h6l1 2h8v9z', '#6e6410', 1, '#b8a51e') + p('M3 15L1 7h12l3 8z', '#6e6410', 1, '#dcc83a'),
	lc: p('M1 16h15', '#333', 1.5) + p('M13 3v9', '#3a6ad0', 2) + p('M10 10h6l-3 5z', 'none', 1, '#3a6ad0'),
	comboG: r(.5, 2.5, 5, 3, '#fff', '#444') + r(.5, 13.5, 5, 3, '#fff', '#444') + p('M7 4q5 0 5 4M7 15q5 0 5-4', '#444') + r(11, 8, 6, 4, '#28b048', '#163'),
	comboB: r(.5, 2.5, 5, 3, '#fff', '#444') + r(.5, 13.5, 5, 3, '#fff', '#444') + p('M7 4q5 0 5 4M7 15q5 0 5-4', '#444') + r(11, 8, 6, 4, '#5a90e8', '#247'),
	modA: '<rect x="1" y="1" width="16" height="16" fill="#fff" stroke="#8585f0" stroke-width="2"/>' + p('M3 13l4-6h8l-3 6z', '#333', 1, '#3cb878') + p('M6 9h6', '#e84', 1.5),
	modI: '<rect x="1" y="1" width="16" height="16" fill="#e4e4ee" stroke="#8585f0" stroke-width="2"/>' + p('M4 5h8M8 5v8M5 13h9', '#444', 2),
	modE: '<rect x="1" y="1" width="16" height="16" fill="#e4e4ee" stroke="#8585f0" stroke-width="2"/>' + p('M4 4h9M8 4v4', '#667', 2) + '<text x="3" y="16" font-size="9" font-weight="bold" font-family="Liberation Sans">EC</text>'
};
var folder = p('M1.500 15.500v-12h6l1 2h8v10z', '#9a8422', 1, '#f3dc55') + p('M2.500 6.500h13', '#fbf0a0') + p('M2 15.500h14.500V6', '#75630f');

// symbols drawn on top of the yellow folder
var marks = {
	plain: '', node: dot(9, 11), line: p('M4 15L14 6', '#333', 1.5) + dot(4, 14.5) + dot(14, 6.5), mat: r(5, 8, 3, 3, '#d22') + r(8, 11, 4, 3, '#2a2') + r(9, 7, 3, 4, '#46c'),
	surf: p('M4 12l3-4h7l-3 4z', '#345', 1, '#6c9ce0'), solid: p('M6 7h7v7H6z', '#246', 1, '#6c9ce0'), hole: r(5.5, 7.5, 7, 6, '#fff', '#468') + r(7.5, 9.5, 3, 2, '#888', '#346'),
	sup: p('M5 15l4-6 4 6z', '#163', 1, '#2a9a40') + dot(9, 8), lsup: p('M4 8h10', '#c22', 2) + p('M4 13l2-3 2 3zM10 13l2-3 2 3z', '#163', 1, '#2a9a40'), ssup: p('M4 8h10l-3 6H7z', '#143', 1, '#2d8a68'),
	hinge: p('M4 11l5-2 5 1-3 3z', '#778', 1, '#fff'), thick: p('M4 12l3-3h7l-3 4z', '#235', 1, '#5a88c8'), orto: p('M4 9h10l-3 4H7z', '#622', 1, '#7890d8') + dot(6, 10), sect: p('M4 7h5M6.500 7v7M4 14h5', '#c22', 1.5) + p('M9 7l5-1v7l-5 2z', '#25a', 1, '#6c9ce0'),
	end: p('M5 7v8M5 10h8', '#543', 1.5) + dot(9, 10), ecc: p('M5 14l8-7', '#888', 3) + dot(5, 14) + dot(11, 7), bar: p('M5 14l8-7', '#888', 3) + dot(4, 15), bed: p('M5 8h9', '#c22', 2) + p('M6 9v5M9 9v5M12 9v5', '#286', 2),
	non: p('M9 6v9', '#c22', 2), x: p('M4 7l9 8M13 7l-9 8', '#222', 1.5) + dot(4, 7.5) + dot(13, 7.5) + dot(4, 14.5) + dot(13, 14.5), cut: c(9, 10.5, 3, '#5a98d8', '#246'), fe: p('M5 7v7M5 8h8v6', '#456', 2) + r(8, 8, 4, 5, '#79b'),
	rel: p('M3 11l3-4h9l-3 4z', '#357', 1, '#a8c8e8') + p('M3 14l3-3h9l-3 4z', '#357', 1, '#5a98d8')
};

function svg(name, size) {
	var body = name.indexOf('f:') == 0 ? folder + marks[name.slice(2)] : icons[name];
	return '<svg width="' + size + '" height="' + size + '" viewBox="0 0 18 18" aria-hidden="true">' + body + '</svg>';
}
document.querySelectorAll('[data-icon]').forEach(function (el) {
	el.innerHTML = svg(el.dataset.icon, el.closest('.hscroll,.vscroll,.caption,.steps') ? 15 : 18);
});

// "|" separator, "v" drop-down arrow, "*" switched on, "+" pressed
document.querySelectorAll('[data-set]').forEach(function (el) {
	el.innerHTML = el.dataset.set.split(' ').map(function (n) {
		if (n == '|') return '<span class="sep"></span>';
		if (n == 'v') return '<button type="button" class="drop" aria-label="Více"></button>';
		var cls = n[0] == '*' ? ' active' : n[0] == '+' ? ' pressed' : '';
		n = n.replace(/^[*+]/, '');
		return '<button type="button" class="tool' + cls + '" aria-label="' + n + '">' + svg(n, 18) + '</button>';
	}).join('');
});

// level, toggle, icon, label
var rows = [
	[0, '-', 'docRoot', 'ff3 [customers projects]'], [1, '-', 'folderOpen', 'Údaje o modelu'],
	[2, '+', 'f:node', 'Uzly'], [2, '+', 'f:line', 'Linie'], [2, '+', 'f:mat', 'Materiály'], [2, '+', 'f:surf', 'Plochy'],
	[2, '', 'f:solid', 'Tělesa'], [2, '', 'f:hole', 'Otvory'], [2, '', 'f:sup', 'Uzlové podpory'], [2, '+', 'f:lsup', 'Liniové podpory'],
	[2, '', 'f:ssup', 'Plošné podpory'], [2, '', 'f:hinge', 'Liniové klouby'], [2, '', 'f:thick', 'Proměnné tloušťky'],
	[2, '', 'f:orto', 'Ortotropní plochy a membrány'], [2, '+', 'f:sect', 'Průřezy'], [2, '', 'f:end', 'Klouby na koncích prutu'],
	[2, '', 'f:ecc', 'Excentricity prutu'], [2, '', 'f:line', 'Dělení prutu'], [2, '+', 'f:bar', 'Pruty'], [2, '', 'f:hinge', 'Žebra'],
	[2, '', 'f:bed', 'Podloží prutu'], [2, '', 'f:non', 'Nelinearity prutu'], [2, '', 'f:ecc', 'Sady prutů'], [2, '', 'f:cut', 'Průniky ploch'],
	[2, '', 'f:fe', 'Zahuštění sítě prvků'], [2, '', 'f:plain', 'Uzlová uvolnění'], [2, '', 'f:plain', 'Typy liniového uvolnění'],
	[2, '', 'f:hinge', 'Liniová uvolnění'], [2, '', 'f:rel', 'Typy plošného uvolnění'], [2, '', 'f:rel', 'Plošná uvolnění'],
	[2, '', 'f:plain', 'Spojení dvou prutů'], [2, '', 'f:plain', 'Spoje'], [2, 'e', 'f:x', 'Uzlové vazby'],
	[1, '-', 'folderOpen', 'Zatěžovací stavy a kombinace'], [2, '+', 'lc', 'Zatěžovací stavy'], [2, '', 'comboG', 'Kombinace zatížení'],
	[2, 'e', 'comboB', 'Kombinace výsledků'], [1, '+', 'f:plain', 'Zatížení'], [1, '+', 'f:plain', 'Výsledky'], [1, '', 'f:plain', 'Řezy'],
	[1, '', 'f:plain', 'Oblasti průměrování'], [1, '', 'f:plain', 'Tiskové protokoly'], [1, '+', 'f:plain', 'Pomocné objekty'],
	[1, '-', 'folderOpen', 'Přídavné moduly'], [2, '', 'modA', 'RF-STEEL Surfaces - Obecná'], [2, '', 'modI', 'RF-STEEL Members - Obecná'],
	[2, '', 'modE', 'RF-STEEL EC3 - Posouzení'], [2, '', 'modE', 'RF-STEEL AISC - Posouzení']
];
document.getElementById('tree').innerHTML = rows.map(function (q) {
	var s = '';
	for (var i = 0; i < q[0]; i++) s += i ? '<i class="v"></i>' : '<i></i>';
	s += '<i class="' + (q[1] == 'e' || !q[0] ? 'e' : 't') + '">';
	if (q[1] == '+' || q[1] == '-') s += '<button type="button" class="' + (q[1] == '+' ? 'plus' : '') + '" aria-label="Rozbalit"></button>';
	return '<li>' + s + '</i><span>' + svg(q[2], 16) + '</span>' + q[3] + '</li>';
}).join('');

// ---- membrane model ----
var arch1 = [[410,580],[431,556],[458,532],[490,509],[519,493],[551,477],[583,468],[615,466],[645,469],[674,478],[697,493],[717,513],[731,536],[741,561],[744,588],[743,618],[737,646]];
var arch2 = [[1110,618],[1091,591],[1076,563],[1066,534],[1063,507],[1064,481],[1070,460],[1080,443],[1096,433],[1118,428],[1143,428],[1171,432],[1200,441],[1229,455],[1261,474],[1289,495],[1316,513]];
var leftEdge = [[321,460],[317,472],[316,487],[318,503],[324,518],[334,531],[346,543],[360,555],[378,567],[404,578]];
var base = [[744,650],[790,651],[836,651],[884,650],[932,647],[989,642],[1050,632],[1105,622]];
var rightEdge = [[1320,508],[1323,494],[1322,480],[1319,466],[1311,449],[1300,436],[1286,422],[1270,411],[1234,385]];
var ridge = [[1193,362],[1139,332],[1096,309],[1050,287],[1014,273],[979,261],[943,251],[907,242],[871,236],[836,233],[800,232],[772,234],[719,242],[669,255],[619,275],[574,300],[540,323],[430,391]];
var outline = leftEdge.concat(arch1, base, arch2, rightEdge, ridge);
function pts(a) { return 'M' + a.map(function (q) { return q[0].toFixed(1) + ' ' + q[1].toFixed(1); }).join('L'); }
document.getElementById('shellPath').setAttribute('d', pts(outline) + 'Z');

// resample the boundary to equal steps
function resample(a, step) {
	var out = [];
	for (var i = 0; i < a.length; i++) {
		var b = a[(i + 1) % a.length], dx = b[0] - a[i][0], dy = b[1] - a[i][1];
		var n = Math.max(1, Math.round(Math.hypot(dx, dy) / step));
		for (var k = 0; k < n; k++) out.push([a[i][0] + dx * k / n, a[i][1] + dy * k / n]);
	}
	return out;
}
var rim = resample(outline, 20), cx = 820, cy = 262, rings = [];
for (var k = 0; k < 26; k++) {
	var f = Math.pow(.855, k), w = Math.pow(f, .8);
	rings.push(rim.map(function (q) {
		var dx = q[0] - cx, dy = q[1] - cy, a = Math.atan2(dy * 1.7, dx);
		var ex = 860 * Math.cos(a), ey = (dy > 0 ? 387 : 200) * Math.sin(a);
		return [cx + f * (w * dx + (1 - w) * ex), cy + f * (w * dy + (1 - w) * ey)];
	}));
}
function tone(x, y) {
	var s = [[225,118],[300,137],[360,156],[400,167],[500,180],[590,189],[655,198]], b = 118;
	for (var i = 1; i < s.length; i++) if (y >= s[i - 1][0]) b = s[i - 1][1] + Math.min(1, (y - s[i - 1][0]) / (s[i][0] - s[i - 1][0])) * (s[i][1] - s[i - 1][1]);
	function near(x1, y1, x2, y2, sg) {
		var l = Math.hypot(x2 - x1, y2 - y1), d = ((x - x1) * (y2 - y1) - (y - y1) * (x2 - x1)) / l;
		return Math.exp(-d * d / sg / sg);
	}
	var m = Math.max(x < 720 ? near(345, 525, 645, 285, 66) : 0, x > 900 ? near(1000, 265, 1320, 470, 55) : 0);
	return Math.round(b + (118 - b) * m);
}
var html = '<path d="' + pts(outline) + 'Z" fill="#7c7c7c"/>', n = rim.length, lines = '';
function dist(a, b) { return Math.hypot(a[0] - b[0], a[1] - b[1]); }
for (k = 0; k < rings.length - 1; k++) {
	for (var i = 0; i < n; i++) {
		var j = (i + 1) % n, A = rings[k][i], B = rings[k][j], C = rings[k + 1][j], D = rings[k + 1][i];
		var g = tone((A[0] + C[0]) / 2, (A[1] + C[1]) / 2), col = 'rgb(' + g + ',' + g + ',' + g + ')';
		html += '<path d="' + pts([A, B, C, D]) + 'Z" fill="' + col + '" stroke="' + col + '"/>';
		var lc = g < 152 ? '#adadad' : g < 166 ? '#b4b4b4' : '#999';
		// meridians are dropped where they would merge into a solid streak
		if (dist(A, B) > 5 || (i % 2 && dist(A, B) > 2.5)) lines += '<path d="' + pts([A, D]) + '" stroke="' + lc + '"/>';
		if (k < 19) lines += '<path d="' + pts([D, C]) + '" stroke="' + lc + '"/>';
	}
}
document.getElementById('mesh').innerHTML = html + '<g fill="none" stroke-width=".8" stroke-dasharray="1 1">' + lines + '</g>';

// straight pipe behind the shell
var back = [[321,456],[375,421],[430,387],[484,353],[537,321],[576,303]];
html = p(pts(back), '#767676', 10) + p(pts(back), '#b2b2b2', 5) + p('M323 459L430 391', '#e6e6e6', 2);
[[350,438],[380,418],[410,398],[441,379],[471,360],[498,343],[524,326],[545,315]].forEach(function (q) { html += p('M' + (q[0] - 2) + ' ' + (q[1] - 5) + 'l4 8', '#fff', 1.5); });
document.getElementById('pipe').innerHTML = html;

function tube(a, hl) {
	return '<g stroke-linejoin="round">' + p(pts(a), '#7c7c7c', 14) + p(pts(a), '#9c9c9c', 12) + p(pts(a), 'url(#' + hl + ')', 7) + '</g>';
}
function joint(x, y, dx, dy, col) { return p('M' + x + ' ' + y + 'l' + dx + ' ' + dy, col || '#c05050', 1); }
html = tube(arch1, 'hl1') + tube(arch2, 'hl2');
html += joint(548, 471, 2, 4) + joint(582, 461, 2, 4) + joint(614, 459, 3, 1) + joint(645, 463, 1, 4) + joint(675, 471, -2, 4) + joint(701, 487, -3, 3) + joint(723, 507, -5, 1);
html += joint(744, 587, 7, 2) + joint(744, 615, 6, 3) + joint(1061, 535, 9, -3) + joint(1072, 564, 7, -4) + joint(1087, 593, 7, -5);
html += joint(1056, 481, 9, 0, '#ccc') + joint(1056, 507, 9, -1, '#ccc') + joint(1063, 459, 7, 1, '#ccc');
[[409,581,40],[736,648,0],[1111,620,-35]].forEach(function (q) {
	html += '<ellipse cx="' + q[0] + '" cy="' + q[1] + '" rx="7" ry="4" fill="#b80000" stroke="#700" transform="rotate(' + q[2] + ' ' + q[0] + ' ' + q[1] + ')"/>' + p('M' + (q[0] - 3) + ' ' + q[1] + 'h6', '#200');
});
document.getElementById('tubes').innerHTML = html;

html = p(pts(leftEdge), '#35d835') + p(pts(base), '#35d835') + p(pts(rightEdge.slice(0, 8)), '#35d835');
[[317,480],[316,493],[319,506],[325,518],[334,532],[346,544],[360,556],[378,568],[398,579],[755,653],[795,654],[835,654],[874,653],[913,652],[951,649],[989,645],[1025,640],[1061,634],[1095,627],[1321,470],[1323,484],[1323,497],[1319,510]].forEach(function (q) {
	html += p('M' + q[0] + ' ' + (q[1] - 3) + 'v6M' + (q[0] - 3) + ' ' + q[1] + 'h6', '#22e022', 1.5);
});
[[328,522],[932,647],[1311,447]].forEach(function (q) { html += r(q[0] - 1, q[1] - 1, 3, 3, '#600'); });
document.getElementById('edges').innerHTML = html;

function triad(x, y) {
	function label(s, a, b, col) { return '<text x="' + (x + a) + '" y="' + (y + b) + '" fill="' + col + '">' + s + '</text>'; }
	return '<g font-family="Liberation Sans" font-size="10">' +
		p('M' + x + ' ' + y + 'v-30', '#0000e0', 2) + p('M' + (x - 3) + ' ' + (y - 29) + 'l3-10 3 10z', 'none', 1, '#0000c8') +
		p('M' + x + ' ' + y + 'l15-8', '#0e0', 1.5) + p('M' + (x + 13) + ' ' + (y - 9) + 'l9-3-6 7z', 'none', 1, '#00a800') +
		p('M' + x + ' ' + y + 'l26 5', '#f00', 1.5) + p('M' + (x + 25) + ' ' + (y + 2) + 'l9 5-10 2z', 'none', 1, '#c00') +
		label('Z', -3, -43, '#00c') + label('Y', 24, -10, '#0d0') + label('X', 39, 13, '#e00') + '</g>';
}
document.getElementById('axes').innerHTML = triad(820, 485) + triad(301, 641);
```
